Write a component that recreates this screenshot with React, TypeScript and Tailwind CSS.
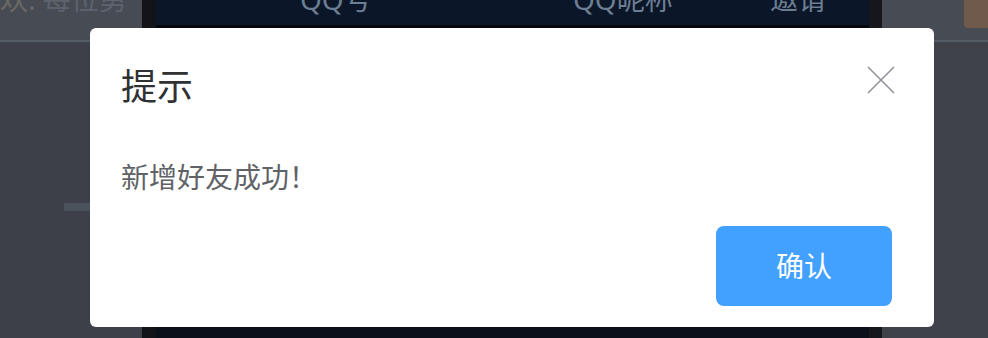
const FONT = '"Noto Sans", "Noto Sans CJK SC", sans-serif'

function Backdrop() {
  return (
    <div className="flex h-full w-full" style={{ fontFamily: FONT }}>
      <div className="flex w-[142px] flex-col bg-[#3d4048]">
        <div className="flex h-[42px] items-end overflow-hidden border-b-2 border-[#565c66] bg-[#474b53]">
          <span className="mb-[26px] whitespace-nowrap text-[28px] leading-[30px] text-[#6a6963]">
            欢: <span className="text-[#5c636e]">每位勇</span>
          </span>
        </div>
        <div className="mt-[161px] ml-[64px] h-[8px] w-[26px] bg-[#4b525c]" />
      </div>
      <div className="w-[14px] bg-[#121419]" />
      <div className="flex w-[713px] flex-col bg-[#0a0f1a]">
        <div className="flex h-[28px] items-end border-b-[3px] border-[#05070b] bg-[#0b1628]">
          <div className="relative h-full w-full overflow-hidden text-[28px] leading-[30px] text-[#6c7e92]">
            <span className="absolute top-[-16px] left-[144px]">QQ号</span>
            <span className="absolute top-[-16px] left-[417px]">QQ昵称</span>
            <span className="absolute top-[-16px] left-[614px]">邀请</span>
          </div>
        </div>
      </div>
      <div className="w-[13px] bg-[#15171c]" />
      <div className="flex flex-1 flex-col bg-[#3f4249]">
        <div className="flex h-[42px] justify-end border-b-2 border-[#565c66] bg-[#474b53]">
          <div className="h-[28px] w-[24px] rounded-bl-[4px] bg-[#6f5a4c]" />
        </div>
      </div>
    </div>
  )
}

export default function App() {
  return (
    <div className="relative h-[338px] w-[988px] overflow-hidden" style={{ fontFamily: FONT }}>
      <Backdrop />
      <div className="absolute top-[28px] left-[90px] flex h-[299px] w-[844px] flex-col rounded-[6px] bg-white">
        <div className="flex items-start justify-between pt-[35px] pr-[39px] pl-[31px]">
          <h2 className="text-[36px] leading-[48px] font-normal text-[#303133]">提示</h2>
          <button className="mt-[3px] text-[#909399]">
            <svg width="28" height="28" viewBox="0 0 28 28" fill="none" stroke="currentColor" strokeWidth="1.6">
              <path d="M1 1 L27 27 M27 1 L1 27" />
            </svg>
          </button>
        </div>
        <div className="pt-[46px] pl-[31px] text-[28px] leading-[40px] text-[#606266]">新增好友成功！</div>
        <div className="mt-auto flex justify-end pr-[42px] pb-[21px]">
          <button className="h-[80px] w-[176px] rounded-[8px] bg-[#42a0ff] text-[28px] text-white">确认</button>
        </div>
      </div>
    </div>
  )
}
